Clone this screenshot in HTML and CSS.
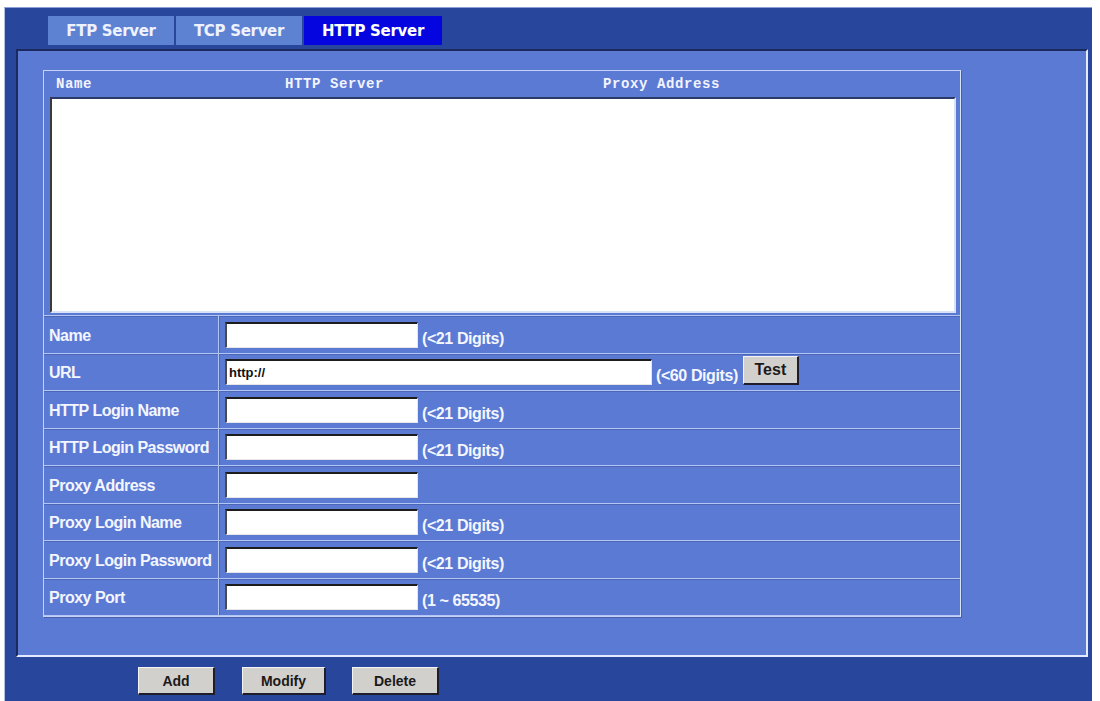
FILE: index.html
```html
<!DOCTYPE html>
<html lang="en">
<head>
    <meta charset="UTF-8">
    <title>HTTP Server</title>
    <link rel="stylesheet" href="styles.css">
</head>
<body>

<div class="frame">
    <div class="tabs">
        <div class="tab">FTP Server</div>
        <div class="tab">TCP Server</div>
        <div class="tab active">HTTP Server</div>
    </div>

    <div class="panel">
        <div class="box">
            <div class="list-head">
                <span>Name</span>
                <span>HTTP Server</span>
                <span>Proxy Address</span>
            </div>
            <div class="list"></div>

            <div class="row">
                <label class="label" for="name">Name</label>
                <div class="value"><input type="text" id="name"><span class="hint">(&lt;21 Digits)</span></div>
            </div>
            <div class="row">
                <label class="label" for="url">URL</label>
                <div class="value"><input type="text" id="url" class="wide" value="http://"><span class="hint">(&lt;60 Digits)</span><button class="btn test">Test</button></div>
            </div>
            <div class="row">
                <label class="label" for="loginName">HTTP Login Name</label>
                <div class="value"><input type="text" id="loginName"><span class="hint">(&lt;21 Digits)</span></div>
            </div>
            <div class="row">
                <label class="label" for="loginPass">HTTP Login Password</label>
                <div class="value"><input type="text" id="loginPass"><span class="hint">(&lt;21 Digits)</span></div>
            </div>
            <div class="row">
                <label class="label" for="proxyAddr">Proxy Address</label>
                <div class="value"><input type="text" id="proxyAddr"></div>
            </div>
            <div class="row">
                <label class="label" for="proxyName">Proxy Login Name</label>
                <div class="value"><input type="text" id="proxyName"><span class="hint">(&lt;21 Digits)</span></div>
            </div>
            <div class="row">
                <label class="label" for="proxyPass">Proxy Login Password</label>
                <div class="value"><input type="text" id="proxyPass"><span class="hint">(&lt;21 Digits)</span></div>
            </div>
            <div class="row last">
                <label class="label" for="proxyPort">Proxy Port</label>
                <div class="value"><input type="text" id="proxyPort"><span class="hint">(1 ~ 65535)</span></div>
            </div>
        </div>
    </div>

    <div class="actions">
        <button class="btn add">Add</button>
        <button class="btn modify">Modify</button>
        <button class="btn delete">Delete</button>
    </div>
</div>

</body>
</html>
```

FILE: styles.css
```css
body {
    margin: 0;
    background-color: #fff;
    font-family: "Liberation Sans", Arial, sans-serif;
}

.frame {
    box-sizing: border-box;
    height: calc(100vh - 7px);
    margin: 7px 8px 0 4px;
    padding: 8px 4px 0 11px;
    background-color: #27469c;
    border-top: 1px solid #8e9fd6;
    border-left: 1px solid #b4c0e6;
    overflow: hidden;
}

.tabs {
    display: flex;
    gap: 2px;
    margin-left: 32px;
}

.tab {
    width: 126px;
    height: 29px;
    line-height: 30px;
    text-align: center;
    background-color: #5e82d2;
    color: #eef2ff;
    font-family: "DejaVu Sans", sans-serif;
    font-weight: bold;
    font-size: 15px;
    letter-spacing: -0.3px;
}

.tab.active {
    width: 138px;
    background-color: #0505e0;
    color: #fff;
}

.panel {
    box-sizing: border-box;
    height: 608px;
    margin-top: 4px;
    padding: 19px 0 0 25px;
    background-color: #5b7ad4;
    border-top: 2px solid #1b2a5e;
    border-left: 2px solid #1b2a5e;
    border-right: 2px solid #e4ebff;
    border-bottom: 2px solid #e4ebff;
}

.box {
    width: 916px;
    border: 1px solid #c4d2f6;
    border-right-color: #dbe4ff;
    box-shadow: 1px 1px 0 #4660ad;
}

.list-head {
    display: grid;
    grid-template-columns: 229px 318px 1fr;
    height: 26px;
    line-height: 26px;
    padding-left: 12px;
    color: #f2f4ff;
    font-family: "Liberation Mono", monospace;
    font-weight: bold;
    font-size: 14px;
    letter-spacing: 0.6px;
}

.list {
    box-sizing: border-box;
    height: 216px;
    margin: 0 4px 2px 6px;
    background-color: #fff;
    border-top: 2px solid #2b3a66;
    border-left: 2px solid #3a3a3a;
    border-right: 2px solid #d9e1f7;
    border-bottom: 2px solid #d9e1f7;
}

.row {
    display: flex;
    box-sizing: border-box;
    height: 37.5px;
    border-top: 1px solid #b2c6f5;
    box-shadow: inset 0 1px 0 #4d67b6;
}

.row.last {
    height: 38.5px;
    border-bottom: 1px solid #b2c6f5;
}

.label {
    box-sizing: border-box;
    width: 175px;
    padding: 3px 0 0 5px;
    display: flex;
    align-items: center;
    border-right: 1px solid #b2c6f5;
    box-shadow: 1px 0 0 #4d67b6;
    color: #f4f6ff;
    font-weight: bold;
    font-size: 16px;
    letter-spacing: -0.5px;
}

.value {
    display: flex;
    align-items: center;
    padding-left: 6px;
}

input[type="text"] {
    box-sizing: border-box;
    width: 193px;
    height: 26px;
    margin: 1px 0 0 0;
    padding: 0 2px;
    background-color: #fff;
    border-top: 2px solid #1c1c1c;
    border-left: 2px solid #4a4a4a;
    border-right: 1px solid #e6e6e6;
    border-bottom: 1px solid #e6e6e6;
    font-family: "Liberation Sans", Arial, sans-serif;
    font-weight: bold;
    font-size: 13px;
    color: #111;
}

input.wide {
    width: 427px;
}

.hint {
    margin: 9px 0 0 4px;
    color: #f4f6ff;
    font-weight: bold;
    font-size: 16px;
    letter-spacing: -0.4px;
}

.btn {
    box-sizing: border-box;
    height: 28px;
    padding: 0;
    background-color: #d2d0cc;
    border-top: 1px solid #f4f4f4;
    border-left: 1px solid #f4f4f4;
    border-right: 2px solid #1e1e2a;
    border-bottom: 2px solid #1e1e2a;
    color: #1a1a1a;
    font-family: "Liberation Sans", Arial, sans-serif;
    font-weight: bold;
    font-size: 14px;
    cursor: pointer;
}

.btn.test {
    width: 56px;
    height: 29px;
    margin: -2px 0 0 5px;
    font-size: 16px;
}

.actions {
    display: flex;
    margin: 10px 0 0 122px;
}

.btn.add {
    width: 77px;
}

.btn.modify {
    width: 84px;
    margin-left: 27px;
}

.btn.delete {
    width: 87px;
    margin-left: 26px;
}
```
